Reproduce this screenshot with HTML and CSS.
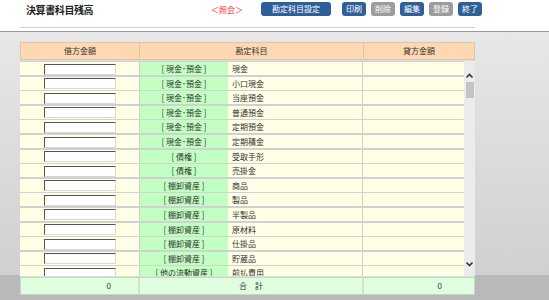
FILE: index.html
```html
<!DOCTYPE html>
<html lang="ja">
<head>
<meta charset="utf-8">
<title>決算書科目残高</title>
<link rel="stylesheet" href="styles.css">
</head>
<body>
<header class="top">
  <div class="top-row">
    <h1 class="title">決算書科目残高</h1>
    <span class="mode">＜照会＞</span>
    <div class="btns">
      <button class="btn btn-wide">勘定科目設定</button>
      <button class="btn btn-first">印刷</button>
      <button class="btn off">削除</button>
      <button class="btn">編集</button>
      <button class="btn off">登録</button>
      <button class="btn">終了</button>
    </div>
  </div>
  <div class="rule"></div>
</header>
<main class="main">
  <div class="panel">
    <div class="thead">
      <div class="th c1">借方金額</div>
      <div class="th c2">勘定科目</div>
      <div class="th c3">貸方金額</div>
    </div>
    <div class="tbody">
      <div class="rows">
        <div class="row"><div class="td d1"><span class="inp"></span></div><div class="td d2">[ 現金･預金 ]</div><div class="td d3">現金</div><div class="td d4"></div></div>
        <div class="row"><div class="td d1"><span class="inp"></span></div><div class="td d2">[ 現金･預金 ]</div><div class="td d3">小口現金</div><div class="td d4"></div></div>
        <div class="row"><div class="td d1"><span class="inp"></span></div><div class="td d2">[ 現金･預金 ]</div><div class="td d3">当座預金</div><div class="td d4"></div></div>
        <div class="row"><div class="td d1"><span class="inp"></span></div><div class="td d2">[ 現金･預金 ]</div><div class="td d3">普通預金</div><div class="td d4"></div></div>
        <div class="row"><div class="td d1"><span class="inp"></span></div><div class="td d2">[ 現金･預金 ]</div><div class="td d3">定期預金</div><div class="td d4"></div></div>
        <div class="row"><div class="td d1"><span class="inp"></span></div><div class="td d2">[ 現金･預金 ]</div><div class="td d3">定期積金</div><div class="td d4"></div></div>
        <div class="row"><div class="td d1"><span class="inp"></span></div><div class="td d2">[ 債権 ]</div><div class="td d3">受取手形</div><div class="td d4"></div></div>
        <div class="row"><div class="td d1"><span class="inp"></span></div><div class="td d2">[ 債権 ]</div><div class="td d3">売掛金</div><div class="td d4"></div></div>
        <div class="row"><div class="td d1"><span class="inp"></span></div><div class="td d2">[ 棚卸資産 ]</div><div class="td d3">商品</div><div class="td d4"></div></div>
        <div class="row"><div class="td d1"><span class="inp"></span></div><div class="td d2">[ 棚卸資産 ]</div><div class="td d3">製品</div><div class="td d4"></div></div>
        <div class="row"><div class="td d1"><span class="inp"></span></div><div class="td d2">[ 棚卸資産 ]</div><div class="td d3">半製品</div><div class="td d4"></div></div>
        <div class="row"><div class="td d1"><span class="inp"></span></div><div class="td d2">[ 棚卸資産 ]</div><div class="td d3">原材料</div><div class="td d4"></div></div>
        <div class="row"><div class="td d1"><span class="inp"></span></div><div class="td d2">[ 棚卸資産 ]</div><div class="td d3">仕掛品</div><div class="td d4"></div></div>
        <div class="row"><div class="td d1"><span class="inp"></span></div><div class="td d2">[ 棚卸資産 ]</div><div class="td d3">貯蔵品</div><div class="td d4"></div></div>
        <div class="row"><div class="td d1"><span class="inp"></span></div><div class="td d2">[ 他の流動資産 ]</div><div class="td d3">前払費用</div><div class="td d4"></div></div>
      </div>
      <div class="sbar">
        <svg class="arr" width="11" height="8" viewBox="0 0 11 8"><path d="M2.5 5.5 L5.5 2.5 L8.5 5.5" fill="none" stroke="#333" stroke-width="1.6"/></svg>
        <div class="thumb"></div>
        <div class="track"></div>
        <svg class="arr" width="11" height="8" viewBox="0 0 11 8"><path d="M2.5 2.5 L5.5 5.5 L8.5 2.5" fill="none" stroke="#333" stroke-width="1.6"/></svg>
      </div>
    </div>
    <div class="tfoot">
      <div class="tf f1">0</div>
      <div class="tf f2">合　計</div>
      <div class="tf f3">0</div>
    </div>
  </div>
</main>
</body>
</html>
```
FILE: styles.css
```css
* { box-sizing: border-box; }
html, body { margin: 0; padding: 0; }
body {
  width: 549px;
  height: 300px;
  overflow: hidden;
  font-family: "Noto Sans CJK JP", "Liberation Sans", sans-serif;
  font-size: 8px;
  color: #333;
  background: #b9b9b9;
}
.top {
  background: #fff;
  height: 32px;
  border-bottom: 1px solid #9a9a9a;
}
.top-row {
  display: flex;
  align-items: center;
  height: 17px;
  padding-left: 26px;
}
.title {
  margin: 0;
  font-size: 10px;
  font-weight: bold;
  color: #222;
  width: 185px;
  letter-spacing: -0.4px;
  line-height: 17px;
  padding-top: 2px;
}
.mode {
  color: #ff2a2a;
  font-size: 8px;
  width: 50px;
  line-height: 17px;
  padding-top: 2px;
}
.btns {
  display: flex;
  align-items: center;
  gap: 5px;
}
.btn {
  font-family: inherit;
  font-size: 8px;
  color: #fff;
  background: #2f5f98;
  border: none;
  border-radius: 3px;
  height: 14px;
  width: 24px;
  padding: 0;
  line-height: 14px;
  margin-top: 1px;
}
.btn-wide { width: 70px; margin-right: 6px; }
.btn.off { background: #9c9c9c; }
.rule {
  margin: 10px 0 0 20px;
  width: 455px;
  height: 1px;
  background: #cfcfcf;
}
.main {
  height: 267px;
  padding: 10px 0 0 20px;
  background: linear-gradient(to bottom, #e7e7e7 0px, #d0d0d0 243px, #b9b9b9 243px, #b9b9b9 100%);
}
.panel {
  width: 455px;
  background: #dcdcdc;
}
.thead {
  display: flex;
  height: 18px;
  background: #fed8b0;
  border: 1px solid #d9c6ae;
}
.th {
  line-height: 16px;
  text-align: center;
}
.c1 { width: 119px; border-right: 1px solid #e3c7a4; }
.c2 { width: 224px; border-right: 1px solid #e3c7a4; }
.c3 { flex: 1; }
.tbody {
  display: flex;
  height: 215px;
  margin-top: 1px;
  overflow: hidden;
  background: #cfcfcf;
}
.rows {
  width: 444px;
  overflow: hidden;
}
.row {
  display: flex;
  height: 14.6px;
  border-top: 1.5px solid #d2d2d2;
}
.td {
  line-height: 14px;
  height: 13.1px;
}
.d1 {
  width: 120px;
  background: #ffffe6;
  border-right: 1px solid #cfcfcf;
  display: flex;
  justify-content: center;
  align-items: center;
}
.inp {
  display: block;
  width: 72px;
  height: 11px;
  background: #fff;
  border-top: 1px solid #555;
  border-left: 1px solid #555;
  border-right: 1px solid #d8d8d8;
  border-bottom: 1px solid #d8d8d8;
  margin-top: 1px;
}
.d2 {
  width: 88px;
  background: #c2ffc2;
  text-align: center;
}
.d3 {
  width: 135px;
  background: #ffffe6;
  padding-left: 4px;
  border-right: 1px solid #cfcfcf;
}
.d4 {
  flex: 1;
  background: #ffffe6;
}
.sbar {
  flex: 1;
  background: #ececec;
  display: flex;
  flex-direction: column;
  align-items: center;
  padding-top: 11px;
}
.arr { display: block; }
.thumb {
  width: 8px;
  height: 16px;
  background: #c4c4c4;
  margin-top: 2px;
}
.track { flex: 1; }
.sbar .arr:last-child { margin-bottom: 8px; }
.tfoot {
  display: flex;
  height: 18px;
  margin-top: 1px;
  background: #dfffdf;
  border: 1px solid #c4d8c4;
}
.tf { line-height: 16px; }
.f1 { width: 119px; text-align: right; padding-right: 27px; border-right: 2px solid #cfe3cf; }
.f2 { width: 224px; text-align: center; border-right: 2px solid #cfe3cf; }
.f3 { flex: 1; text-align: right; padding-right: 32px; }
```
